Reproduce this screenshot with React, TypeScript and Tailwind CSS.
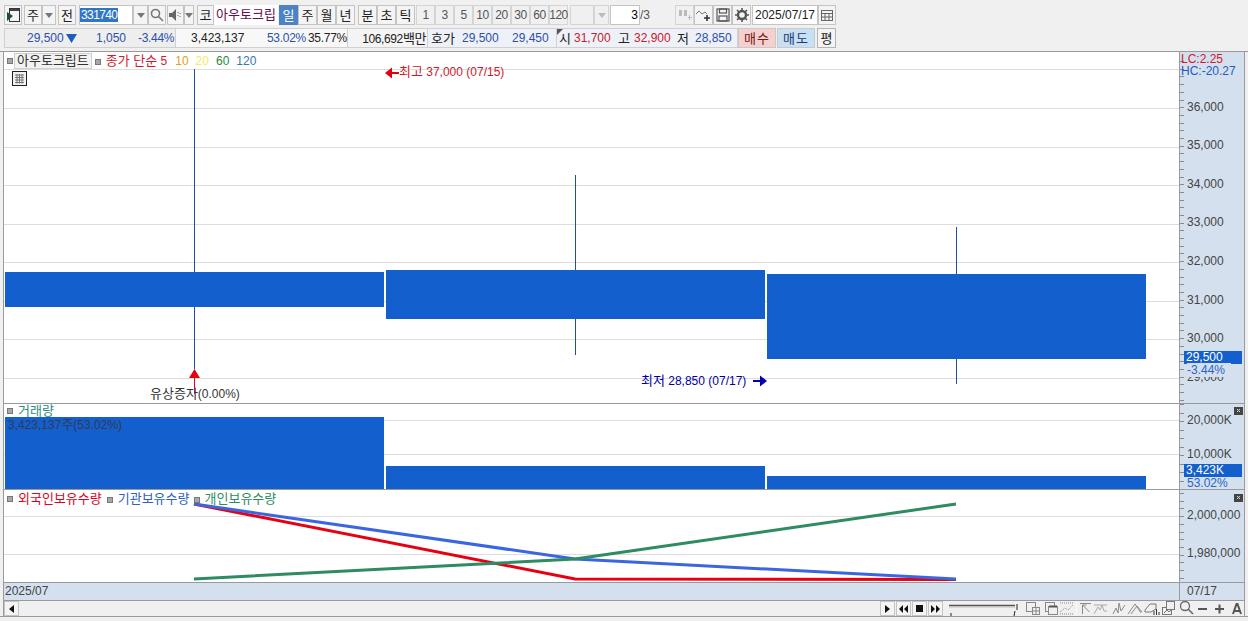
import React from 'react';

const FONT = "font-['Liberation_Sans','Noto_Sans_CJK_KR',sans-serif]";
const BLUE = '#135fcd';

const K: React.FC<{ children: React.ReactNode }> = ({ children }) => <span className="text-[13px]">{children}</span>;

const ToolBtn: React.FC<{ w: string; children?: React.ReactNode; active?: boolean; muted?: boolean }> = ({
  w,
  children,
  active,
  muted,
}) => (
  <div
    className={`${w} h-[20px] shrink-0 flex items-center justify-center border text-[12px] leading-none ${
      active
        ? 'bg-[#4d83c4] text-white border-[#4d83c4]'
        : muted
          ? 'bg-[#f0f0f0] text-[#555] border-[#d4d4d4]'
          : 'bg-[#f4f4f4] text-[#222] border-[#c4c4c4]'
    }`}
  >
    {children}
  </div>
);

const Caret: React.FC<{ color?: string }> = ({ color = '#777' }) => (
  <svg width="8" height="5" viewBox="0 0 8 5">
    <path d="M0 0h8L4 5z" fill={color} />
  </svg>
);

const Square: React.FC = () => (
  <span className="inline-block w-[6px] h-[6px] shrink-0 bg-[#a8a8a8] border border-[#777]" />
);

const TopBar: React.FC = () => (
  <div className="h-[28px] pt-[5px] pl-[4px] flex items-start shrink-0">
    <ToolBtn w="w-[18px]">
      <svg width="13" height="14" viewBox="0 0 13 14">
        <rect x="2.500" y="0.500" width="10" height="13" fill="#f4f4f4" stroke="#333" />
        <path d="M3 1h9v2H3z" fill="#444" />
        <path d="M0 4l6 4-6 5z" fill="#1d4a44" />
      </svg>
    </ToolBtn>
    <div className="w-[2px]" />
    <ToolBtn w="w-[18px]"><K>주</K></ToolBtn>
    <ToolBtn w="w-[14px]"><Caret /></ToolBtn>
    <div className="w-[2px]" />
    <ToolBtn w="w-[18px]"><K>전</K></ToolBtn>
    <div className="w-[3px]" />
    <div className="w-[54px] h-[20px] bg-white border border-[#c4c4c4] flex items-center pl-[0px]">
      <span className="bg-[#2f76c8] text-white text-[12px] leading-[14px] tracking-[-0.6px] px-[1px]">331740</span>
    </div>
    <ToolBtn w="w-[15px]"><Caret /></ToolBtn>
    <ToolBtn w="w-[18px]">
      <svg width="14" height="14" viewBox="0 0 14 14" fill="none" stroke="#777" strokeWidth="1.6">
        <circle cx="5.5" cy="5.5" r="4" />
        <path d="M8.5 8.5l4.5 4.5" />
      </svg>
    </ToolBtn>
    <div className="w-[1px]" />
    <ToolBtn w="w-[17px]">
      <svg width="13" height="12" viewBox="0 0 13 12">
        <path d="M0 4h3l4-4v12L3 8H0z" fill="#666" />
        <path d="M9 3v1M9 6v1M9 9v0M11 4v1M11 7v1" stroke="#666" />
      </svg>
    </ToolBtn>
    <ToolBtn w="w-[10px]"><Caret /></ToolBtn>
    <div className="w-[3px]" />
    <ToolBtn w="w-[17px]"><K>코</K></ToolBtn>
    <div className="w-[64px] h-[20px] bg-white text-[#6a0d4f] text-[13px] leading-[19px] text-center">아우토크립</div>
    <div className="w-[1px]" />
    <ToolBtn w="w-[19px]" active><K>일</K></ToolBtn>
    <ToolBtn w="w-[19px]"><K>주</K></ToolBtn>
    <ToolBtn w="w-[19px]"><K>월</K></ToolBtn>
    <ToolBtn w="w-[19px]"><K>년</K></ToolBtn>
    <div className="w-[3px]" />
    <ToolBtn w="w-[19px]"><K>분</K></ToolBtn>
    <ToolBtn w="w-[19px]"><K>초</K></ToolBtn>
    <ToolBtn w="w-[19px]"><K>틱</K></ToolBtn>
    <div className="w-[1px]" />
    {['1', '3', '5', '10', '20', '30', '60', '120'].map((n) => (
      <ToolBtn key={n} w="w-[19px]" muted>
        <span className="tracking-[-0.5px]">{n}</span>
      </ToolBtn>
    ))}
    <div className="w-[2px]" />
    <div className="w-[24px] h-[20px] bg-[#f0f0f0] border border-[#d4d4d4]" />
    <ToolBtn w="w-[15px]" muted><Caret color="#bbb" /></ToolBtn>
    <div className="w-[1px]" />
    <div className="w-[30px] h-[20px] bg-white border border-[#c4c4c4] text-[12px] leading-[18px] text-right pr-[1px]">3</div>
    <div className="w-[35px] text-[12px] leading-[20px] text-[#555]">/3</div>
    <ToolBtn w="w-[19px]" muted>
      <svg width="14" height="12" viewBox="0 0 14 12" fill="#bbb">
        <rect x="1" y="1" width="3" height="6" />
        <rect x="6" y="1" width="3" height="6" />
        <path d="M10 8h1v-2h1v2h2v1h-2v2h-1V9h-1z" />
      </svg>
    </ToolBtn>
    <ToolBtn w="w-[19px]">
      <svg width="15" height="13" viewBox="0 0 15 13" fill="none" stroke="#777">
        <path d="M0 5l3-3 3 3 3-2 2 2" />
        <path d="M11 6v6M8 9h6" stroke="#333" strokeWidth="1.6" />
      </svg>
    </ToolBtn>
    <ToolBtn w="w-[19px]">
      <svg width="14" height="14" viewBox="0 0 14 14" fill="none" stroke="#555" strokeWidth="1.2">
        <rect x="1" y="1" width="12" height="12" />
        <rect x="3.5" y="1" width="7" height="4" />
        <rect x="3" y="8" width="8" height="5" />
      </svg>
    </ToolBtn>
    <ToolBtn w="w-[19px]">
      <svg width="14" height="14" viewBox="0 0 14 14">
        <circle cx="7" cy="7" r="4" fill="none" stroke="#555" strokeWidth="2.4" />
        <path d="M7 0v3M7 11v3M0 7h3M11 7h3M2 2l2 2M10 10l2 2M2 12l2-2M10 4l2-2" stroke="#555" strokeWidth="1.6" />
      </svg>
    </ToolBtn>
    <div className="w-[1px]" />
    <div className="w-[66px] h-[20px] bg-white border border-[#c4c4c4] text-[12px] leading-[18px] text-center text-[#222]">2025/07/17</div>
    <ToolBtn w="w-[18px]">
      <svg width="12" height="11" viewBox="0 0 12 11" fill="none" stroke="#666">
        <rect x="0.5" y="0.5" width="11" height="10" />
        <path d="M0 3.5h12M0 7h12M4 3.5V11M8 3.5V11" />
      </svg>
    </ToolBtn>
  </div>
);

const QuoteBar: React.FC = () => (
  <div className="h-[22px] pl-[4px] flex items-start shrink-0 text-[12px] leading-[19px]">
    <div className="w-[172px] h-[20px] bg-[#eeeeee] border border-[#d0d0d0] relative text-[#2c4fa8]">
      <span className="absolute left-[22px]">29,500</span>
      <svg className="absolute left-[61px] top-[5px]" width="11" height="9" viewBox="0 0 11 9">
        <path d="M0 0h11L5.5 9z" fill="#1f5cc0" />
      </svg>
      <span className="absolute left-[91px]">1,050</span>
      <span className="absolute left-[133px] tracking-[-0.3px]">-3.44%</span>
    </div>
    <div className="w-[171px] h-[20px] bg-[#f8f8f8] border-y border-[#d0d0d0] relative">
      <span className="absolute left-[15px] text-[#222]">3,423,137</span>
      <span className="absolute left-[91px] text-[#2c4fa8] tracking-[-0.3px]">53.02%</span>
      <span className="absolute left-[132px] text-[#222] tracking-[-0.3px]">35.77%</span>
    </div>
    <div className="w-[81px] h-[20px] bg-[#f4f4f4] border border-[#d0d0d0] text-[#222] text-right pr-[1px] tracking-[-0.4px]">
      106,692<K>백만</K>
    </div>
    <div className="w-[128px] h-[20px] bg-[#eef2f8] border-y border-[#d0d0d0] relative">
      <span className="absolute left-[3px] text-[#222]"><K>호가</K></span>
      <span className="absolute left-[34px] text-[#2c4fa8]">29,500</span>
      <span className="absolute left-[84px] text-[#2c4fa8]">29,450</span>
    </div>
    <div className="w-[182px] h-[20px] bg-[#eef2f8] border border-[#d0d0d0] relative">
      <svg className="absolute left-0 top-0" width="6" height="6" viewBox="0 0 6 6">
        <path d="M0 0h6L0 6z" fill="#555" />
      </svg>
      <span className="absolute left-[2px] text-[#222]"><K>시</K></span>
      <span className="absolute left-[17px] text-[#c8202a]">31,700</span>
      <span className="absolute left-[61px] text-[#222]"><K>고</K></span>
      <span className="absolute left-[77px] text-[#c8202a]">32,900</span>
      <span className="absolute left-[120px] text-[#222]"><K>저</K></span>
      <span className="absolute left-[138px] text-[#2c4fa8]">28,850</span>
    </div>
    <div className="w-[38px] h-[20px] bg-[#f6d0cc] border border-[#c9c9c9] text-center text-[#6e1a1a] tracking-[1px]"><K>매수</K></div>
    <div className="w-[1px]" />
    <div className="w-[38px] h-[20px] bg-[#c8e0f6] border border-[#c9c9c9] text-center text-[#1c3d6e] tracking-[1px]"><K>매도</K></div>
    <div className="w-[2px]" />
    <div className="w-[19px] h-[20px] bg-[#f4f4f4] border border-[#b4b4b4] text-center text-[#222]"><K>평</K></div>
  </div>
);

// axis column ticks; y values are relative to the panel top
const Axis: React.FC<{ step: number; start: number; height: number; children?: React.ReactNode }> = ({
  step,
  start,
  height,
  children,
}) => {
  const ticks: number[] = [];
  for (let y = start; y < height; y += step) ticks.push(Math.round(y));
  return (
    <div className="w-[65px] shrink-0 relative bg-[#d4e0ee] border-l border-[#9a9a9a] overflow-hidden text-[12px] leading-[14px]">
      <svg className="absolute left-0 top-0" width="6" height={height}>
        {ticks.map((y) => (
          <line key={y} x1="0" x2="4" y1={y + 0.5} y2={y + 0.5} stroke="#8a8a8a" />
        ))}
      </svg>
      {children}
    </div>
  );
};

const AxisLabel: React.FC<{ y: number; children: React.ReactNode }> = ({ y, children }) => (
  <span className="absolute left-[7px] text-[#444]" style={{ top: y - 7 }}>
    {children}
  </span>
);

const CloseBox: React.FC<{ y: number }> = ({ y }) => (
  <svg className="absolute left-[54px]" style={{ top: y }} width="9" height="8" viewBox="0 0 9 8">
    <rect width="9" height="8" fill="#444" />
    <path d="M3 2l3 3M6 2L3 5" stroke="#ddd" />
  </svg>
);

const MAIN_GRID = [17, 56, 95, 133, 172, 210, 249, 287, 326];
const GRID = '#dedcdc';

const MainPanel: React.FC = () => (
  <div className="h-[352px] flex shrink-0 border-b border-[#9a9a9a]">
    <div className="flex-1 relative bg-white overflow-hidden">
      <svg className="absolute inset-0" width="1175" height="351">
        {MAIN_GRID.map((y) => (
          <line key={y} x1="0" x2="1175" y1={y + 0.5} y2={y + 0.5} stroke={GRID} />
        ))}
        <line x1="190.5" x2="190.5" y1="17" y2="317" stroke="#1f4fa0" />
        <line x1="571.5" x2="571.5" y1="123" y2="303" stroke="#1f4fa0" />
        <line x1="952.5" x2="952.5" y1="175" y2="332" stroke="#1f4fa0" />
        <rect x="1" y="220" width="379" height="35" fill={BLUE} />
        <rect x="382" y="218" width="379" height="49" fill={BLUE} />
        <rect x="763" y="222" width="379" height="85" fill={BLUE} />
        <path d="M190.5 317l-5.5 9h11z" fill="#e00012" />
        <line x1="190.5" x2="190.5" y1="324" y2="342" stroke="#e00012" />
        <path d="M381 21l7-5.5v4.500h7v2h-7v4.500z" fill="#e00012" />
        <path d="M763 329l-7-5.500v4.500h-7v2h7v4.500z" fill="#0000b0" />
      </svg>
      <div className="absolute left-[3px] top-[1px] flex items-center text-[12px] leading-[14px]">
        <Square />
        <span className="ml-[1px] px-[2px] bg-[#f2f2f2] border border-[#cfcfcf] text-[#333] text-[13px]">아우토크립트</span>
        <span className="ml-[3px]"><Square /></span>
        <span className="ml-[5px] text-[#d01a2a]"><K>종가 단순</K> 5</span>
        <span className="ml-[8px] text-[#e0a020]">10</span>
        <span className="ml-[7px] text-[#f2ea60]">20</span>
        <span className="ml-[7px] text-[#1f8a3f]">60</span>
        <span className="ml-[7px] text-[#2f78b0]">120</span>
      </div>
      <svg className="absolute left-[8px] top-[19px]" width="15" height="15" viewBox="0 0 15 15" fill="none">
        <rect x="0.500" y="0.500" width="14" height="14" fill="#f2f2f2" stroke="#222" />
        <path d="M3 4h9M3 6.500h9M3 9h9M3 11.500h9M5 3v9.500M7.500 3v9.500M10 3v9.500" stroke="#777" />
      </svg>
      <span className="absolute left-[395px] top-[13px] text-[12px] leading-[14px] text-[#d01a2a]"><K>최고</K> 37,000 (07/15)</span>
      <span className="absolute left-[637px] top-[322px] text-[12px] leading-[14px] text-[#0000a0]"><K>최저</K> 28,850 (07/17)</span>
      <span className="absolute left-[146px] top-[335px] text-[12px] leading-[14px] text-[#333]"><K>유상증자</K>(0.00%)</span>
    </div>
    <Axis step={7.7} start={9} height={351}>
      <span className="absolute left-[1px] top-[0px] text-[#d01a2a]">LC:2.25</span>
      <span className="absolute left-[1px] top-[12px] text-[#1f5cc0]">HC:-20.27</span>
      {[
        ['36,000', 55],
        ['35,000', 93],
        ['34,000', 132],
        ['33,000', 170],
        ['32,000', 209],
        ['31,000', 248],
        ['30,000', 286],
        ['29,000', 325],
      ].map(([t, y]) => (
        <AxisLabel key={t as string} y={y as number}>{t}</AxisLabel>
      ))}
      <span className="absolute left-[4px] top-[299px] w-[58px] h-[13px] bg-[#135fcd] text-white pl-[2px] leading-[13px]">29,500</span>
      <span className="absolute left-[7px] top-[311px] h-[14px] pr-[6px] bg-[#d4e0ee] text-[#2a63c8]">-3.44%</span>
    </Axis>
  </div>
);

const VolumePanel: React.FC = () => (
  <div className="h-[86px] flex shrink-0 border-b border-[#9a9a9a]">
    <div className="flex-1 relative bg-white overflow-hidden">
      <svg className="absolute inset-0" width="1175" height="85">
        <line x1="0" x2="1175" y1="16.500" y2="16.500" stroke={GRID} />
        <line x1="0" x2="1175" y1="50.500" y2="50.500" stroke={GRID} />
        <rect x="1" y="13" width="379" height="72" fill={BLUE} />
        <rect x="382" y="62" width="379" height="23" fill={BLUE} />
        <rect x="763" y="72" width="379" height="13" fill={BLUE} />
      </svg>
      <div className="absolute left-[3px] top-[0px] flex items-center text-[13px] leading-[14px]">
        <Square />
        <span className="ml-[5px] text-[#2f8a80]">거래량</span>
      </div>
      <span className="absolute left-[4px] top-[14px] text-[12px] leading-[14px] text-[#333a52]">3,423,137<K>주</K>(53.02%)</span>
    </div>
    <Axis step={8.500} start={0} height={85}>
      <CloseBox y={3} />
      <AxisLabel y={16}>20,000K</AxisLabel>
      <AxisLabel y={50}>10,000K</AxisLabel>
      <span className="absolute left-[4px] top-[60px] w-[58px] h-[13px] bg-[#135fcd] text-white pl-[2px] leading-[13px]">3,423K</span>
      <span className="absolute left-[7px] top-[72px] text-[#2a63c8]">53.02%</span>
    </Axis>
  </div>
);

const HoldingPanel: React.FC = () => (
  <div className="h-[93px] flex shrink-0 border-b border-[#9a9a9a]">
    <div className="flex-1 relative bg-white overflow-hidden">
      <svg className="absolute inset-0" width="1175" height="92">
        <line x1="0" x2="1175" y1="26.500" y2="26.500" stroke={GRID} />
        <line x1="0" x2="1175" y1="64.500" y2="64.500" stroke={GRID} />
        <polyline points="190,14 571,89 952,89.500" fill="none" stroke="#e60012" strokeWidth="3" />
        <polyline points="190,14 571,69 952,89" fill="none" stroke="#3a66e0" strokeWidth="3" />
        <polyline points="190,89 571,69 952,14" fill="none" stroke="#2e8b62" strokeWidth="3" />
      </svg>
      <div className="absolute left-[3px] top-[2px] flex items-center text-[13px] leading-[14px]">
        <Square />
        <span className="ml-[5px] text-[#e0001a]">외국인보유수량</span>
        <span className="ml-[5px]"><Square /></span>
        <span className="ml-[5px] text-[#2f5fc0]">기관보유수량</span>
        <span className="ml-[4px]"><Square /></span>
        <span className="ml-[5px] text-[#2e8b62]">개인보유수량</span>
      </div>
    </div>
    <Axis step={7.700} start={3} height={92}>
      <CloseBox y={4} />
      <AxisLabel y={25}>2,000,000</AxisLabel>
      <AxisLabel y={63}>1,980,000</AxisLabel>
    </Axis>
  </div>
);

const DateBar: React.FC = () => (
  <div className="h-[18px] flex shrink-0 bg-[#d4e0ee] border-b border-[#9a9a9a] text-[12px] leading-[16px] text-[#444]">
    <div className="flex-1 pl-[1px]">2025/07</div>
    <div className="w-[65px] shrink-0 border-l border-[#9a9a9a] pl-[7px]">07/17</div>
  </div>
);

const MiniBtn: React.FC<{ children: React.ReactNode }> = ({ children }) => (
  <div className="w-[15px] h-[15px] shrink-0 bg-[#f4f4f4] border border-[#c4c4c4] flex items-center justify-center">{children}</div>
);

const ScrollBar: React.FC = () => (
  <div className="h-[15px] flex items-center shrink-0">
    <MiniBtn>
      <svg width="5" height="8" viewBox="0 0 5 8"><path d="M5 0v8L0 4z" fill="#111" /></svg>
    </MiniBtn>
    <div className="w-[857px] h-[15px] shrink-0 bg-[#f0f0f0]" />
    <div className="flex items-center gap-[1px] ml-[4px] shrink-0">
      <MiniBtn>
        <svg width="5" height="8" viewBox="0 0 5 8"><path d="M0 0v8l5-4z" fill="#111" /></svg>
      </MiniBtn>
      <MiniBtn>
        <svg width="9" height="8" viewBox="0 0 9 8"><path d="M4 0v8L0 4zM9 0v8L5 4z" fill="#111" /></svg>
      </MiniBtn>
      <MiniBtn>
        <svg width="7" height="7" viewBox="0 0 7 7"><rect width="7" height="7" fill="#111" /></svg>
      </MiniBtn>
      <MiniBtn>
        <svg width="9" height="8" viewBox="0 0 9 8"><path d="M0 0v8l4-4zM5 0v8l4-4z" fill="#111" /></svg>
      </MiniBtn>
    </div>
    <svg className="ml-[6px] shrink-0" width="72" height="15" viewBox="0 0 72 15" fill="none">
      <path d="M0 4.500h66" stroke="#555" strokeWidth="1.500" />
      <path d="M0 6h66" stroke="#bbb" />
      <path d="M2 12v3M68 3v6M66 10l-1 5" stroke="#222" />
    </svg>
    {/* drawing tools */}
    <svg className="ml-[5px] shrink-0" width="216" height="15" viewBox="0 0 216 15" fill="none">
      <g stroke="#888">
        <rect x="0.500" y="1.500" width="9" height="9" />
        <rect x="6.500" y="6.500" width="7" height="7" fill="#f0f0f0" />
        <path d="M10 7v6M7 10h6" />
        <rect x="19.500" y="1.500" width="9" height="9" />
        <rect x="22.500" y="5.500" width="9" height="8" fill="#f0f0f0" />
        <path d="M23 5.500h8" stroke="#555" strokeWidth="2" />
        <path d="M34 11l5-4 3 2 5-5" strokeDasharray="1 1" />
        <path d="M34 2h13M34 13h13" strokeDasharray="1 1" />
      </g>
      <rect x="50" y="0" width="1" height="15" fill="#fafafa" />
      <g stroke="#8a8a8a">
        <path d="M54 2.500h11M56.500 13V4l7 7M56.500 4h4" />
        <path d="M68 13l4-7 2 3 2-5 2 6h3M68 4h13" stroke="#aaa" />
        <path d="M87 13l3-6 2 5 1-10 2 8 4-6" />
        <path d="M102 13l7-10 6 9M105 13l6-8 5 6" />
      </g>
      <g stroke="#777">
        <path d="M119 9l5-6h6v5l-5 3h-6z" />
        <path d="M128 10v4M130.500 8v6M133 11v3" stroke="#333" />
        <rect x="136.500" y="6.500" width="9" height="7" />
        <rect x="140.500" y="0.500" width="8" height="8" fill="#f0f0f0" />
        <path d="M138 12l3-3 2 2 3-3" />
      </g>
      <circle cx="159" cy="5" r="4.500" stroke="#666" strokeWidth="1.300" />
      <path d="M162 8l5 5" stroke="#666" strokeWidth="1.600" />
      <path d="M172 8h9" stroke="#555" strokeWidth="2" />
      <path d="M189 8h9M193.500 3.500v9" stroke="#555" strokeWidth="2" />
      <path d="M207 13l3.500-10h1l3.500 10M208.500 10h5" stroke="#555" strokeWidth="2" />
    </svg>
  </div>
);

const App: React.FC = () => (
  <div className={`w-[1248px] h-[621px] overflow-hidden bg-[#f0f0f0] flex flex-col ${FONT}`}>
    <TopBar />
    <QuoteBar />
    <div className="h-[1px] bg-[#9a9a9a] shrink-0 mt-[1px]" />
    <div className="ml-[3px] mr-[3px] border-x border-[#9a9a9a] flex flex-col shrink-0">
      <MainPanel />
      <VolumePanel />
      <HoldingPanel />
      <DateBar />
      <ScrollBar />
    </div>
    <div className="h-[1px] bg-[#9a9a9a] shrink-0" />
  </div>
);

export default App;
